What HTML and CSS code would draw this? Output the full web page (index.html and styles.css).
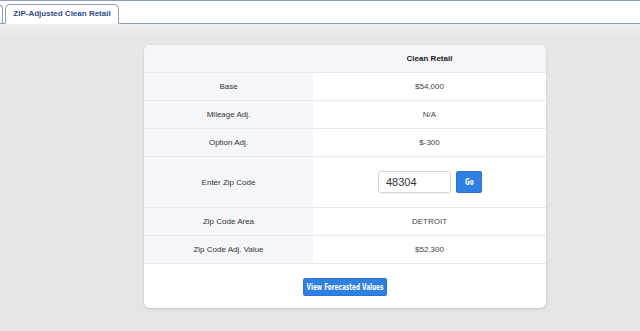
FILE: index.html
```html
<!DOCTYPE html>
<html>
<head>
<meta charset="utf-8">
<link rel="stylesheet" href="styles.css">
</head>
<body>
<div class="tabbar">
  <div class="tab-prev"></div>
  <div class="tab">ZIP-Adjusted Clean Retail</div>
</div>
<main class="stage">
  <section class="card">
    <div class="row head">
      <div class="label"></div>
      <div class="value bold">Clean Retail</div>
    </div>
    <div class="row">
      <div class="label">Base</div>
      <div class="value">$54,000</div>
    </div>
    <div class="row">
      <div class="label">Mileage Adj.</div>
      <div class="value">N/A</div>
    </div>
    <div class="row">
      <div class="label">Option Adj.</div>
      <div class="value">$-300</div>
    </div>
    <div class="row tall">
      <div class="label">Enter Zip Code</div>
      <div class="value">
        <div class="zipform">
          <input class="zip" type="text" value="48304">
          <button class="btn go"><span class="cond">Go</span></button>
        </div>
      </div>
    </div>
    <div class="row">
      <div class="label">Zip Code Area</div>
      <div class="value">DETROIT</div>
    </div>
    <div class="row">
      <div class="label">Zip Code Adj. Value</div>
      <div class="value">$52,300</div>
    </div>
    <div class="foot">
      <button class="btn forecast"><span class="cond">View Forecasted Values</span></button>
    </div>
  </section>
</main>
</body>
</html>
```
FILE: styles.css
```css
html, body {
  margin: 0;
  padding: 0;
  height: 100%;
}
body {
  font-family: "Liberation Sans", Arial, sans-serif;
  font-size: 8px;
  color: #333;
  background: linear-gradient(#f6f6f6 0px, #e7e7e7 40px, #e5e5e5 100%);
  overflow: hidden;
}
.tabbar {
  height: 23px;
  background: #fff;
  border-top: 1px solid #8e9cbf;
  border-bottom: 1px solid #8e9cbf;
  display: flex;
  align-items: flex-end;
  gap: 2px;
  box-sizing: border-box;
  height: 24px;
}
.tab-prev {
  width: 3px;
  height: 19px;
  border: 1px solid #8e9cbf;
  border-left: none;
  border-bottom: none;
  border-top-right-radius: 4px;
  margin-bottom: -1px;
  box-sizing: border-box;
}
.tab {
  height: 20px;
  width: 114px;
  box-sizing: border-box;
  border: 1px solid #8e9cbf;
  border-bottom: 1px solid #fff;
  border-radius: 5px 5px 0 0;
  margin-bottom: -1px;
  background: #fff;
  color: #2f4a86;
  font-weight: bold;
  font-size: 8px;
  display: flex;
  align-items: center;
  justify-content: center;
  padding-bottom: 1px;
}
.stage {
  padding: 21px 94px 0 144px;
}
.card {
  width: 402px;
  background: #fff;
  border-radius: 6px;
  box-shadow: 0 1px 3px rgba(0,0,0,0.14), 0 0 1px rgba(0,0,0,0.08);
  overflow: hidden;
}
.row {
  display: grid;
  grid-template-columns: 169px 1fr;
  height: 28px;
  border-bottom: 1px solid #e8e9ee;
  box-sizing: border-box;
}
.row.head {
  background: #f5f6fa;
}
.row.tall {
  height: 51px;
}
.label {
  background: #f5f6fa;
  display: flex;
  align-items: center;
  justify-content: center;
  color: #333;
}
.value {
  display: flex;
  align-items: center;
  justify-content: center;
  color: #444;
}
.bold {
  font-weight: bold;
  color: #222;
}
.zipform {
  display: flex;
  align-items: center;
  gap: 5px;
  padding-left: 1px;
}
.zip {
  width: 73px;
  height: 22px;
  box-sizing: border-box;
  border: 1px solid #d4d6dc;
  border-radius: 3px;
  font-family: "Liberation Sans", Arial, sans-serif;
  font-size: 11px;
  color: #333;
  padding: 0 7px;
  box-shadow: 0 1px 2px rgba(0,0,0,0.06);
  outline: none;
}
.btn {
  background: #2f80e3;
  border: 1px solid #2a74cf;
  border-radius: 2px;
  color: #fff;
  font-family: "DejaVu Sans Condensed", "DejaVu Sans", sans-serif;
  font-weight: bold;
  padding: 0;
  display: flex;
  align-items: center;
  justify-content: center;
  box-sizing: border-box;
}
.cond {
  display: inline-block;
  transform: scaleX(0.8);
}
.go {
  width: 26px;
  height: 22px;
  font-size: 8px;
}
.forecast {
  width: 84px;
  height: 18px;
  font-size: 8px;
  white-space: nowrap;
}
.foot {
  height: 44px;
  display: flex;
  justify-content: center;
  padding-top: 14px;
  box-sizing: border-box;
}
```
